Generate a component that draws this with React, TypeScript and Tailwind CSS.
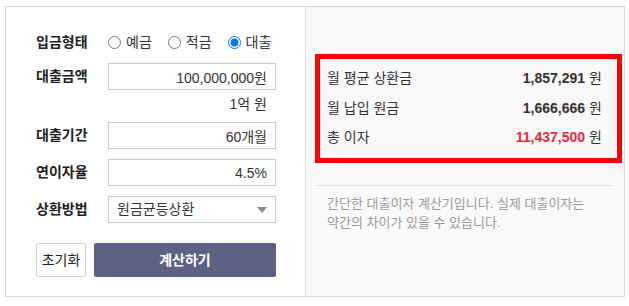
import React from "react";

const font = { fontFamily: '"Liberation Sans", "Noto Sans CJK KR", sans-serif' };

function Label({ children }: { children: React.ReactNode }) {
  return (
    <div className="w-[72px] shrink-0 text-[14px] font-semibold text-[#222]">{children}</div>
  );
}

function Field({ value }: { value: string }) {
  return (
    <input
      readOnly
      value={value}
      className="w-[168px] h-[27px] border border-[#c8c8c8] bg-white text-right pr-[8px] text-[14px] text-[#333] outline-none"
      style={font}
    />
  );
}

function Radio({ label, checked }: { label: string; checked?: boolean }) {
  return (
    <label className="flex items-center gap-[5px] text-[14px] text-[#333]">
      <input type="radio" name="kind" defaultChecked={checked} className="m-0 w-[13px] h-[13px]" />
      <span>{label}</span>
    </label>
  );
}

function ResultRow({ label, value, red }: { label: string; value: string; red?: boolean }) {
  return (
    <div className="flex items-center justify-between h-[29.5px] text-[14px] text-[#333]">
      <span>{label}</span>
      <span>
        <b className={red ? "text-[#e8283a]" : "text-[#333]"}>{value}</b>
        <span className="ml-[4px]">원</span>
      </span>
    </div>
  );
}

export default function App() {
  return (
    <div className="w-[629px] h-[306px] bg-white pt-[6px] pl-[5px]" style={font}>
      <div className="flex w-[620px] h-[291px] border border-[#d6d6d6] bg-white">
        <div className="w-[300px] shrink-0 border-r border-[#e2e2e2] pl-[30px] pt-[22px]">
          <div className="flex items-center h-[27px]">
            <Label>입금형태</Label>
            <div className="flex items-center gap-[16px]">
              <Radio label="예금" />
              <Radio label="적금" />
              <Radio label="대출" checked />
            </div>
          </div>
          <div className="flex items-center mt-[7px]">
            <Label>대출금액</Label>
            <Field value="100,000,000원" />
          </div>
          <div className="flex justify-end w-[231px] h-[20px] mt-[4px] items-center text-[14px] text-[#333]">
            1억 원
          </div>
          <div className="flex items-center mt-[8px]">
            <Label>대출기간</Label>
            <Field value="60개월" />
          </div>
          <div className="flex items-center mt-[10px]">
            <Label>연이자율</Label>
            <Field value="4.5%" />
          </div>
          <div className="flex items-center mt-[10px]">
            <Label>상환방법</Label>
            <div className="w-[168px] h-[27px] border border-[#c8c8c8] bg-white flex items-center justify-between pl-[8px] pr-[8px] text-[14px] text-[#333]">
              <span>원금균등상환</span>
              <svg width="10" height="6" viewBox="0 0 10 6">
                <polygon points="0,0 10,0 5,6" fill="#8a8a8a" />
              </svg>
            </div>
          </div>
          <div className="flex mt-[20px] gap-[8px]">
            <button className="w-[50px] h-[34px] border border-[#cfcfcf] bg-white text-[14px] text-[#222] rounded-[2px]">
              초기화
            </button>
            <button className="w-[182px] h-[34px] bg-[#5d6284] text-white text-[14px] font-bold rounded-[2px]">
              계산하기
            </button>
          </div>
        </div>
        <div className="flex-1 bg-[#f9f9f9] pt-[47px]">
          <div className="ml-[9px] w-[307px] h-[109px] border-[5px] border-[#ff0000] pl-[7px] pr-[15px] pt-[5px]">
            <ResultRow label="월 평균 상환금" value="1,857,291" />
            <ResultRow label="월 납입 원금" value="1,666,666" />
            <ResultRow label="총 이자" value="11,437,500" red />
          </div>
          <div className="mx-[10px] mt-[22px] border-t border-[#e3e3e3] pt-[8px] pl-[11px] text-[13px] leading-[19px] text-[#9a9a9a]">
            간단한 대출이자 계산기입니다. 실제 대출이자는
            <br />
            약간의 차이가 있을 수 있습니다.
          </div>
        </div>
      </div>
    </div>
  );
}
